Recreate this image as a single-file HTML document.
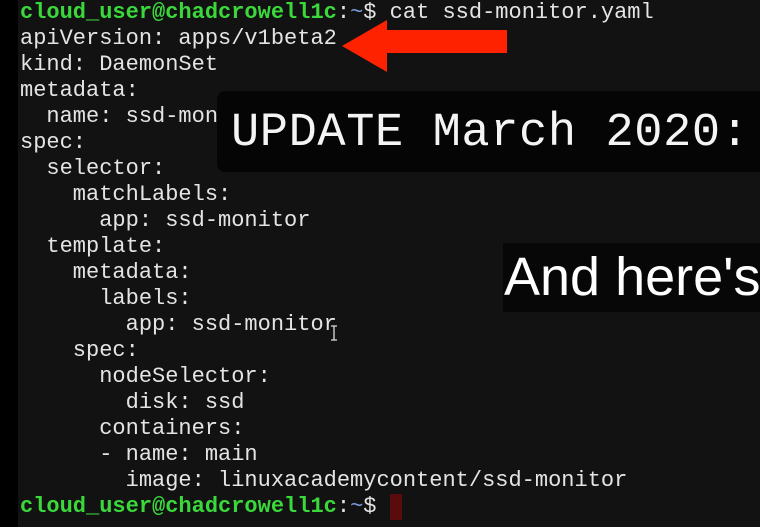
<!DOCTYPE html>
<html><head><meta charset="utf-8"><style>
body{margin:0;width:760px;height:527px;background:#121212;overflow:hidden;position:relative}
.l{position:absolute;left:0;top:0;width:18px;height:527px;background:#000}
pre{position:absolute;left:20px;top:0;margin:0;font:22px/26px "Liberation Mono",monospace;color:#e4e4e4;letter-spacing:0}
.g{color:#3ad83a;font-weight:bold}.b{color:#7c9ee0}
.u{position:absolute;left:217px;top:91px;width:560px;height:81px;background:#050505;border-radius:8px;font:47px/86px "Liberation Mono",monospace;color:#f4f4f4;padding-left:14px;box-sizing:border-box;white-space:nowrap;letter-spacing:0.6px}
.a{position:absolute;left:503px;top:243px;width:260px;height:69px;background:#070707;font:54px/69px "Liberation Sans",sans-serif;color:#fff;padding-left:1px;white-space:nowrap}
.c{position:absolute;left:390px;top:494px;width:12px;height:26px;background:#5a0c0c}
</style></head><body>
<div class="l"></div>
<pre><span class="g">cloud_user@chadcrowell1c</span>:<span class="b">~</span>$ cat ssd-monitor.yaml
apiVersion: apps/v1beta2
kind: DaemonSet
metadata:
  name: ssd-monitor
spec:
  selector:
    matchLabels:
      app: ssd-monitor
  template:
    metadata:
      labels:
        app: ssd-monitor
    spec:
      nodeSelector:
        disk: ssd
      containers:
      - name: main
        image: linuxacademycontent/ssd-monitor
<span class="g">cloud_user@chadcrowell1c</span>:<span class="b">~</span>$ </pre>
<div class="c"></div>
<svg style="position:absolute;left:0;top:0" width="760" height="527"><polygon points="342,46 387,20 387,30 507,30 507,53 387,53 387,72" fill="#ff2200"/>
<path d="M331 326h6M334 326v14M331 340h6" stroke="#ddd" stroke-width="1.3" fill="none"/></svg>
<div class="u">UPDATE March 2020:</div>
<div class="a">And here's</div>
</body></html>
